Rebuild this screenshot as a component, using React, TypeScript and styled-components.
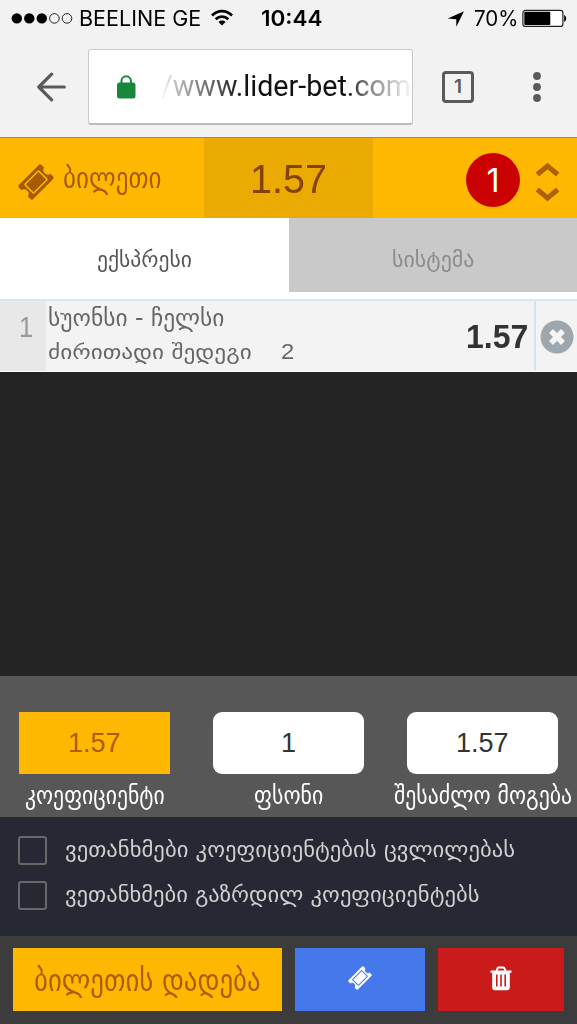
import React, { useLayoutEffect, useRef, useState } from "react";
import styled, { createGlobalStyle } from "styled-components";

const GlobalStyle = createGlobalStyle`
  * { box-sizing: border-box; }
  body { margin: 0; background: #f2f2f2; }
  svg { display: block; flex: none; }
`;

const GEO = '"DejaVu Sans Condensed", "DejaVu Sans", sans-serif';
const ARIAL = '"Liberation Sans", Arial, sans-serif';
const SYSTEM = 'Inter, "Liberation Sans", sans-serif';

const FitBox = styled.span<{ $w: number }>`
  display: block;
  flex: none;
  width: ${(p) => p.$w}px;
  white-space: nowrap;
  text-align: left;
`;

const FitInner = styled.span<{ $size: number; $font: string; $weight: number; $lh: number; $color: string }>`
  display: inline-block;
  vertical-align: top;
  transform-origin: 0 0;
  font: ${(p) => p.$weight} ${(p) => p.$size}px/${(p) => p.$lh}px ${(p) => p.$font};
  color: ${(p) => p.$color};
`;

type LabelProps = {
  width: number;
  size: number;
  lh: number;
  color: string;
  font?: string;
  weight?: number;
  children: React.ReactNode;
};

/* A one-line label condensed or expanded to the width its slot allows. */
function Label({ width, size, lh, color, font = GEO, weight = 400, children }: LabelProps) {
  const ref = useRef<HTMLSpanElement>(null);
  const [scale, setScale] = useState(1);
  useLayoutEffect(() => {
    if (ref.current) setScale(width / ref.current.offsetWidth);
  }, [width, size]);
  return (
    <FitBox $w={width}>
      <FitInner ref={ref} $size={size} $font={font} $weight={weight} $lh={lh} $color={color} style={{ transform: `scaleX(${scale})` }}>
        {children}
      </FitInner>
    </FitBox>
  );
}

const Screen = styled.main`
  display: flex;
  flex-direction: column;
  width: 577px;
  height: 1024px;
  overflow: hidden;
  background: #fff;
`;

const StatusBar = styled.div`
  display: flex;
  height: 38px;
  padding-left: 11px;
  background: #f2f2f2;
`;
const Gap = styled.span<{ $w: number }>`
  flex: none;
  width: ${(p) => p.$w}px;
`;

const BrowserBar = styled.div`
  display: flex;
  height: 100px;
  padding: 11px 0 0 36px;
  background: #f2f2f2;
  border-bottom: 1px solid #ba8a1c;
`;
const ToolIcon = styled.div`
  display: flex;
  height: 75px;
  align-items: center;
`;
const AddressBar = styled.div`
  display: flex;
  width: 325px;
  height: 76px;
  margin: 0 29px 0 22px;
  padding-left: 28px;
  background: #fff;
  border: 1px solid #c9c9c9;
  border-bottom: 2px solid #bcbcbc;
  border-radius: 3px;
`;
const Address = styled.div`
  width: 254px;
  height: 73px;
  margin-left: 24px;
  padding-left: 1px;
  overflow: hidden;
  mask-image: linear-gradient(90deg, transparent 0, rgba(0,0,0,.3) 18px, rgba(0,0,0,.7) 58px, #000 82px, #000 186px, rgba(0,0,0,.6) 205px, transparent 254px);
`;
const TabCount = styled.div`
  display: flex;
  justify-content: center;
  width: 32px;
  height: 32px;
  border: 3px solid #5a5a5a;
  border-radius: 4px;
  font: 600 19px/25px ${SYSTEM};
  color: #5a5a5a;
`;

const TicketHeader = styled.header`
  display: flex;
  height: 80px;
  background: #ffb802;
`;
const TicketTitle = styled.div`
  display: flex;
  width: 204px;
  padding-left: 18px;
`;
const TotalOdds = styled.div`
  display: flex;
  justify-content: center;
  width: 169px;
  background: #ebaa02;
`;
const HeaderActions = styled.div`
  display: flex;
  flex: 1;
  padding-left: 93px;
`;
const CountBadge = styled.div`
  width: 54px;
  height: 54px;
  margin-top: 15px;
  border-radius: 50%;
  background: #cb0000;
  color: #fff;
  font: 400 32px/56px ${SYSTEM};
  text-align: center;
`;

const Tabs = styled.nav`
  display: flex;
  height: 81px;
  padding-bottom: 7px;
`;
const Tab = styled.div<{ $active?: boolean }>`
  display: flex;
  justify-content: center;
  width: ${(p) => (p.$active ? 288.5 : 288.5)}px;
  background: ${(p) => (p.$active ? "#fff" : "#c9c9c9")};
`;

const BetRow = styled.section`
  display: flex;
  height: 73px;
  border-top: 2px solid #d9e7f4;
  border-bottom: 1px solid #fff;
  background: #f3f3f3;
`;
const BetIndex = styled.div`
  width: 46px;
  padding-left: 19px;
  background: #e8e8e8;
`;
const BetInfo = styled.div`
  width: 420px;
  padding-left: 2px;
`;
const Outcome = styled.div`
  display: flex;
  gap: 29px;
`;
const RemoveCell = styled.div`
  display: flex;
  flex: 1;
  margin-left: 6px;
  padding: 19px 0 0 4px;
  border-left: 2px solid #d5e4f3;
`;

const EmptyArea = styled.div`
  height: 304px;
  background: #242424;
`;

const StakePanel = styled.section`
  display: flex;
  height: 141px;
  padding: 36px 0 0 19px;
  gap: 43px;
  background: #575757;
`;
const StakeField = styled.div`
  display: flex;
  flex-direction: column;
  align-items: center;
  width: 151px;
`;
const StakeValue = styled.div<{ $accent?: boolean }>`
  display: flex;
  justify-content: center;
  width: 151px;
  height: 63px;
  border-radius: ${(p) => (p.$accent ? 0 : 9)}px;
  background: ${(p) => (p.$accent ? "#ffb802" : "#fff")};
`;

const Options = styled.section`
  height: 119px;
  padding: 19px 0 0 18px;
  background: #262834;
`;
const Option = styled.div`
  display: flex;
  height: 45px;
  gap: 18px;
`;
const Checkbox = styled.span`
  width: 29px;
  height: 29px;
  border: 2px solid #686868;
  border-radius: 3px;
`;

const Footer = styled.footer`
  display: flex;
  height: 88px;
  padding: 12px 13px 13px;
  gap: 13px;
  background: #3c3c3c;
`;
const Action = styled.button<{ $bg: string; $w: number }>`
  display: flex;
  justify-content: center;
  width: ${(p) => p.$w}px;
  height: 63px;
  padding: 0;
  border: 0;
  background: ${(p) => p.$bg};
`;
const IconSlot = styled.span<{ $top: number; $left?: number }>`
  display: block;
  flex: none;
  margin: ${(p) => p.$top}px 0 0 ${(p) => p.$left || 0}px;
`;

const TicketIcon = ({ size, color, gap }: { size: number; color: string; gap: string }) => (
  <svg width={size} height={size} viewBox="-18 -18 36 36">
    <g transform="rotate(-45)">
      <path
        d="M-14 -10H14Q16 -10 16 -8V-4.500A4.600 4.600 0 0 0 16 4.500V8Q16 10 14 10H-14Q-16 10 -16 8V4.500A4.600 4.600 0 0 0 -16 -4.500V-8Q-16 -10 -14 -10Z"
        fill={color}
      />
      <rect x="-9.700" y="-6.200" width="19.400" height="12.400" rx=".6" fill="none" stroke={gap} strokeWidth="1.500" />
    </g>
  </svg>
);

export default function App() {
  return (
    <Screen>
      <GlobalStyle />
      <StatusBar>
        <IconSlot $top={12}>
          <svg width="62" height="13" viewBox="0 0 62 13">
            {[5.8, 18.3, 30.8].map((x) => <circle key={x} cx={x} cy="6.4" r="5.2" />)}
            {[43.4, 56].map((x) => <circle key={x} cx={x} cy="6.4" r="4.8" fill="none" stroke="#222" />)}
          </svg>
        </IconSlot>
        <Gap $w={6} />
        <Label width={122} size={21} lh={38} color="#000" font={SYSTEM}>BEELINE GE</Label>
        <IconSlot $top={9} $left={10}>
          <svg width="22" height="17" viewBox="0 0 22 17" fill="none" stroke="#000" strokeWidth="2.8">
            <path d="M1 6.4C6.8.7 15.2.7 21 6.4" />
            <path d="M4.7 10.2c3.6-3.5 9-3.5 12.6 0" />
            <path d="M11 16.5l-3.500-3.600c2-1.900 5-1.900 7 0z" fill="#000" stroke="none" />
          </svg>
        </IconSlot>
        <Gap $w={28} />
        <Label width={61} size={21} lh={38} color="#000" font={SYSTEM} weight={600}>10:44</Label>
        <IconSlot $top={11} $left={125}>
          <svg width="18" height="16" viewBox="0 0 18 16"><path d="M17 .3L9.300 15.700V8.200L.8 7.600z" /></svg>
        </IconSlot>
        <Gap $w={9} />
        <Label width={44} size={21} lh={38} color="#000" font={SYSTEM}>70%</Label>
        <IconSlot $top={9} $left={4}>
          <svg width="46" height="19" viewBox="0 0 46 19">
            <rect x=".9" y="1.4" width="40" height="16" rx="2.5" fill="#fff" stroke="#222" strokeWidth="1.2" />
            <rect x="2.3" y="2.8" width="26" height="13.2" rx="1" />
            <path d="M42.2 6v7c1-.5 2-1.8 2-3.5S43.200 6.500 42.200 6z" />
          </svg>
        </IconSlot>
      </StatusBar>

      <BrowserBar>
        <ToolIcon>
          <svg width="30" height="30" viewBox="0 0 30 30" fill="none" stroke="#5a5a5a" strokeWidth="3.200" strokeLinecap="round" strokeLinejoin="round">
            <path d="M28.300 15H3M15.600 2.200L2.800 15l12.800 12.800" />
          </svg>
        </ToolIcon>
        <AddressBar>
          <IconSlot $top={25}>
            <svg width="19" height="24" viewBox="0 0 19 24">
              <path d="M4.500 9V6a4.700 4.700 0 0 1 9.400 0v3" fill="none" stroke="#17873b" strokeWidth="2" />
              <rect x="0" y="7.500" width="18.500" height="16" rx="2.500" fill="#17873b" />
            </svg>
          </IconSlot>
          <Address>
            <Label width={250} size={29} lh={73} color="#111" font="Roboto, sans-serif">/www.lider-bet.com</Label>
          </Address>
        </AddressBar>
        <ToolIcon><TabCount>1</TabCount></ToolIcon>
        <Gap $w={58} />
        <ToolIcon>
          <svg width="10" height="32" viewBox="0 0 10 32" fill="#5a5a5a">
            <circle cx="5" cy="5" r="3.900" /><circle cx="5" cy="16" r="3.900" /><circle cx="5" cy="27" r="3.900" />
          </svg>
        </ToolIcon>
      </BrowserBar>

      <TicketHeader>
        <TicketTitle>
          <IconSlot $top={26}><TicketIcon size={36} color="#a85a00" gap="#ffb802" /></IconSlot>
          <Gap $w={9} />
          <Label width={98} size={29} lh={81} color="#a85a00">ბილეთი</Label>
        </TicketTitle>
        <TotalOdds><Label width={77} size={40} lh={83} color="#854300" font={ARIAL}>1.57</Label></TotalOdds>
        <HeaderActions>
          <CountBadge>1</CountBadge>
          <IconSlot $top={23} $left={15}>
            <svg width="25" height="42" viewBox="0 0 25 42" fill="none" stroke="#ad6100" strokeWidth="5">
              <path d="M2.300 13.500L12.500 5l10.200 8.500M2.300 28.500L12.500 37l10.200-8.500" />
            </svg>
          </IconSlot>
        </HeaderActions>
      </TicketHeader>

      <Tabs>
        <Tab $active><Label width={95} size={22} lh={83} color="#555">ექსპრესი</Label></Tab>
        <Tab><Label width={82} size={22} lh={83} color="#8b8b8b">სისტემა</Label></Tab>
      </Tabs>

      <BetRow>
        <BetIndex><Label width={14} size={29} lh={53} color="#999" font={ARIAL}>1</Label></BetIndex>
        <BetInfo>
          <Label width={177} size={24} lh={35} color="#666">სუონსი - ჩელსი</Label>
          <Outcome>
            <Label width={204} size={20} lh={33} color="#666">ძირითადი შედეგი</Label>
            <Label width={13} size={22} lh={32} color="#666" font={ARIAL}>2</Label>
          </Outcome>
        </BetInfo>
        <Label width={62} size={33} lh={71} color="#333" font={ARIAL} weight={700}>1.57</Label>
        <RemoveCell>
          <svg width="34" height="34" viewBox="0 0 34 34">
            <circle cx="17" cy="17" r="16.500" fill="#9ea6ae" />
            <path d="M11 11l12 12M23 11L11 23" stroke="#f5f5f5" strokeWidth="5.600" />
          </svg>
        </RemoveCell>
      </BetRow>

      <EmptyArea />

      <StakePanel>
        <StakeField>
          <StakeValue $accent><Label width={53} size={27} lh={62} color="#ad5c00" font={ARIAL}>1.57</Label></StakeValue>
          <Label width={140} size={26} lh={43} color="#fff">კოეფიციენტი</Label>
        </StakeField>
        <StakeField>
          <StakeValue><Label width={15} size={27} lh={62} color="#333" font={ARIAL}>1</Label></StakeValue>
          <Label width={69} size={26} lh={43} color="#fff">ფსონი</Label>
        </StakeField>
        <StakeField>
          <StakeValue><Label width={53} size={27} lh={62} color="#333" font={ARIAL}>1.57</Label></StakeValue>
          <Label width={178} size={26} lh={43} color="#fff">შესაძლო მოგება</Label>
        </StakeField>
      </StakePanel>

      <Options>
        <Option><Checkbox /><Label width={450} size={21} lh={28} color="#d0d0d0">ვეთანხმები კოეფიციენტების ცვლილებას</Label></Option>
        <Option><Checkbox /><Label width={414} size={21} lh={28} color="#d0d0d0">ვეთანხმები გაზრდილ კოეფიციენტებს</Label></Option>
      </Options>

      <Footer>
        <Action $bg="#ffb802" $w={270}><Label width={227} size={31} lh={64} color="#ad5c00">ბილეთის დადება</Label></Action>
        <Action $bg="#4579eb" $w={129.5}><IconSlot $top={18}><TicketIcon size={24} color="#fff" gap="#4579eb" /></IconSlot></Action>
        <Action $bg="#c81b1a" $w={126.5}>
          <IconSlot $top={18}>
            <svg width="22" height="25" viewBox="0 0 22 25">
              <path d="M6.500 5l1-2.600q.4-.9 1.400-.9h4.200q1 0 1.400.9l1 2.600" fill="none" stroke="#fff" strokeWidth="2" />
              <path d="M.5 4.500h21v2.200h-1.700v14.800q0 2.800-2.800 2.800H5q-2.800 0-2.800-2.800V6.700H.5z" fill="#fff" />
              <path d="M6.800 8.500v12M11 8.500v12M15.200 8.500v12" stroke="#c81b1a" strokeWidth="1.600" />
            </svg>
          </IconSlot>
        </Action>
      </Footer>
    </Screen>
  );
}
